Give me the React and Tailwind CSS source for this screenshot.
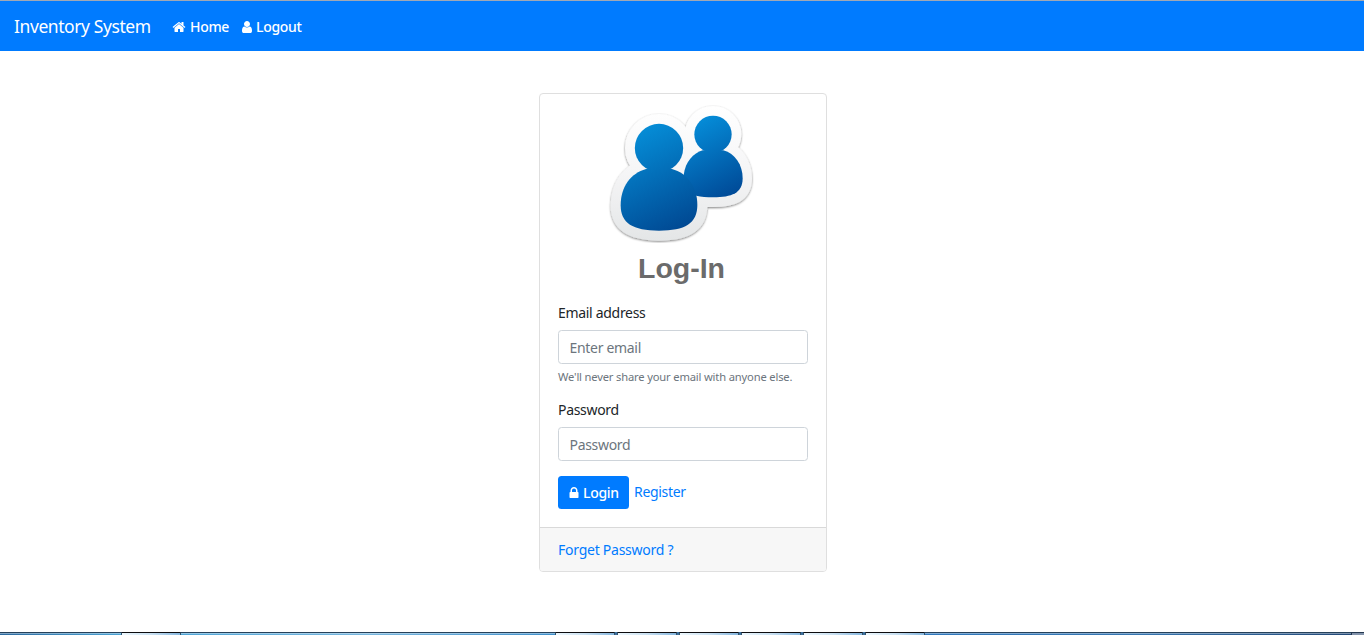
import React from 'react';

const HOME =
  'M1472 992v480q0 26-19 45t-45 19h-384v-384h-256v384h-384q-26 0-45-19t-19-45v-480q0-1 .5-3t.5-3l575-474 575 474q1 2 1 6zm223-69l-62 74q-8 9-21 11h-3q-13 0-21-7l-692-577-692 577q-12 8-24 7-13-2-21-11l-62-74q-8-10-7-23.5t11-21.5l719-599q32-26 76-26t76 26l244 204v-195q0-14 9-23t23-9h192q14 0 23 9t9 23v408l219 182q10 8 11 21.5t-7 23.5z';
const USER =
  'M1536 1399q0 109-62.5 187t-150.5 78h-854q-88 0-150.5-78t-62.5-187q0-85 8.5-160.5t31.5-152 58.5-131 94-89 134.5-34.5q131 128 313 128t313-128q76 0 134.5 34.5t94 89 58.5 131 31.5 152 8.5 160.5zm-256-887q0 159-112.5 271.5t-271.5 112.5-271.5-112.5-112.5-271.5 112.5-271.5 271.5-112.5 271.5 112.5 112.5 271.5z';
const LOCK =
  'M640 768h512v-192q0-106-75-181t-181-75-181 75-75 181v192zm832 96v576q0 40-28 68t-68 28h-960q-40 0-68-28t-28-68v-576q0-40 28-68t68-28h32v-192q0-184 132-316t316-132 316 132 132 316v192h32q40 0 68 28t28 68z';

const FRONT_BODY =
  'M62 346C62 290 92 250 138 237L216 237C262 250 292 290 292 345C292 400 255 422 177 422C98 422 62 400 62 346Z';
const BACK_BODY =
  'M251 255C256 215 280 190 308 181L370 181C405 190 428 225 428 265C428 310 395 322 340 322C320 322 303 321 289 317L270 300Z';
const BACK_HALO =
  'M251 255C256 215 280 190 308 181L370 181C403 190 426 225 426 265C426 310 395 321 340 321C320 321 303 320 289 317L270 300Z';

function Icon({ d, className = '' }) {
  return (
    <svg viewBox="0 0 1792 1792" fill="currentColor" className={`size-3.5 shrink-0 ${className}`} aria-hidden="true">
      <path d={d} />
    </svg>
  );
}

function UsersPicture() {
  return (
    <svg viewBox="0 12 510 474" className="ml-[60px] h-[158px] w-[170px] shrink-0" aria-hidden="true">
      <defs>
        <linearGradient id="front" gradientUnits="userSpaceOnUse" x1="105" y1="130" x2="255" y2="425">
          <stop offset="0" stopColor="#058cd6" />
          <stop offset="1" stopColor="#004690" />
        </linearGradient>
        <linearGradient id="back" gradientUnits="userSpaceOnUse" x1="285" y1="95" x2="400" y2="315">
          <stop offset="0" stopColor="#058cd8" />
          <stop offset="1" stopColor="#004a97" />
        </linearGradient>
        <linearGradient id="halo" gradientUnits="userSpaceOnUse" x1="0" y1="50" x2="0" y2="452">
          <stop offset="0" stopColor="#ffffff" />
          <stop offset="0.5" stopColor="#f5f5f6" />
          <stop offset="1" stopColor="#e4e6e7" />
        </linearGradient>
        <filter id="shade" x="-10%" y="-10%" width="120%" height="120%">
          <feDropShadow dx="0" dy="3" stdDeviation="3" floodColor="#000" floodOpacity="0.5" />
        </filter>
      </defs>
      <g filter="url(#shade)" fill="url(#halo)" stroke="url(#halo)" strokeWidth="60" strokeLinejoin="round">
        <circle cx="339" cy="133" r="55" />
        <path d={BACK_HALO} />
        <circle cx="177" cy="174" r="72" />
        <path d={FRONT_BODY} />
      </g>
      <g fill="url(#back)">
        <circle cx="339" cy="133" r="56" />
        <path d={BACK_BODY} />
      </g>
      <g fill="url(#front)">
        <circle cx="177" cy="174" r="72.5" />
        <path d={FRONT_BODY} />
      </g>
    </svg>
  );
}

function Tab() {
  return (
    <div className="mr-[2px] h-[3px] w-[60px] shrink-0 rounded-t-[1px] border-x border-t border-x-[#34536c] border-t-[#0c0c0f] bg-linear-to-r from-[#eef8fd] via-[#c9e0f1] to-[#85b7df]" />
  );
}

function Strip({ className }) {
  return (
    <div className={`h-[3px] border-t border-t-[#26415a] bg-linear-to-r ${className}`}>
      <div className="h-px bg-white/40" />
    </div>
  );
}

function Taskbar() {
  return (
    <div className="flex h-[3px] w-full shrink-0 bg-[#3c6f9c]">
      <Strip className="w-[121px] from-[#2c6a9f] to-[#4ba3d4]" />
      <Tab />
      <Strip className="-ml-[2px] w-[374px] from-[#4fa5d6] via-[#76b5dd] to-[#3e8fca]" />
      <Tab />
      <Tab />
      <Tab />
      <Tab />
      <Tab />
      <Tab />
      <Strip className="-ml-[2px] flex-1 from-[#2f78bd] via-[#3575b0] to-[#244a78]" />
      <div className="h-[3px] w-[13px] border-t border-l border-[#23364e] bg-[#8192aa]" />
    </div>
  );
}

export default function App() {
  return (
    <div className="flex h-[635px] w-full flex-col overflow-hidden bg-white font-['Noto_Sans','Open_Sans',sans-serif] text-sm tracking-[-0.31px] text-[#212529]">
      <nav className="flex h-[51px] shrink-0 items-center border-t border-[#a0a8b5] bg-[#007bff] pl-3.5 pt-0.5 text-white">
        <a className="w-[158px] text-[17.5px] leading-6 tracking-[-0.42px] whitespace-nowrap">
          <span className="block -translate-y-px">Inventory System</span>
        </a>
        <a className="flex w-[68px] items-center whitespace-nowrap font-medium">
          <Icon d={HOME} className="mr-[4px]" />
          Home
        </a>
        <a className="flex items-center whitespace-nowrap font-medium">
          <Icon d={USER} className="mr-[2px]" />
          Logout
        </a>
      </nav>

      <main className="flex flex-1 justify-center pl-0.5 pt-[42px]">
        <div className="flex h-[479px] w-[288px] flex-col overflow-hidden rounded-[4px] border border-[#dfdfdf]">
          <UsersPicture />
          <h1 className="mr-[3px] h-[32px] text-center font-['Liberation_Sans',Arial,sans-serif] text-[28.5px] leading-8 font-bold tracking-normal text-[#6b6b6b]">
            Log-In
          </h1>
          <form className="flex flex-1 flex-col px-[18px] pt-[18px]">
            <label className="h-[21px] leading-[21px]">Email address</label>
            <input
              placeholder="Enter email"
              className="mt-[7px] h-[34px] rounded-[3.5px] border border-[#ced4da] px-[10.5px] pt-px tracking-[-0.31px] placeholder:text-[#6c757d]"
            />
            <small className="mt-[3px] h-[19px] text-[11.2px] leading-[19px] tracking-[-0.17px] whitespace-nowrap text-[#6c757d]">
              We'll never share your email with anyone else.
            </small>
            <label className="mt-[13px] h-[21px] leading-[21px]">Password</label>
            <input
              placeholder="Password"
              className="mt-[7px] h-[34px] rounded-[3.5px] border border-[#ced4da] px-[10.5px] pt-px tracking-[-0.31px] placeholder:text-[#6c757d]"
            />
            <div className="mt-[15px] flex">
              <button
                type="button"
                className="flex h-[33px] w-[71px] items-center rounded-[3.5px] bg-[#007bff] pl-[9px] pt-px font-medium tracking-[-0.31px] text-white"
              >
                <Icon d={LOCK} className="mr-[2px]" />
                Login
              </button>
              <a className="ml-[5px] leading-[31px] text-[#007bff]">Register</a>
            </div>
          </form>
          <div className="h-[44px] shrink-0 border-t border-[#d9d9d9] bg-[#f7f7f7] px-[18px] leading-[44px] tracking-[-0.25px] text-[#007bff]">
            Forget Password ?
          </div>
        </div>
      </main>
      <Taskbar />
    </div>
  );
}
